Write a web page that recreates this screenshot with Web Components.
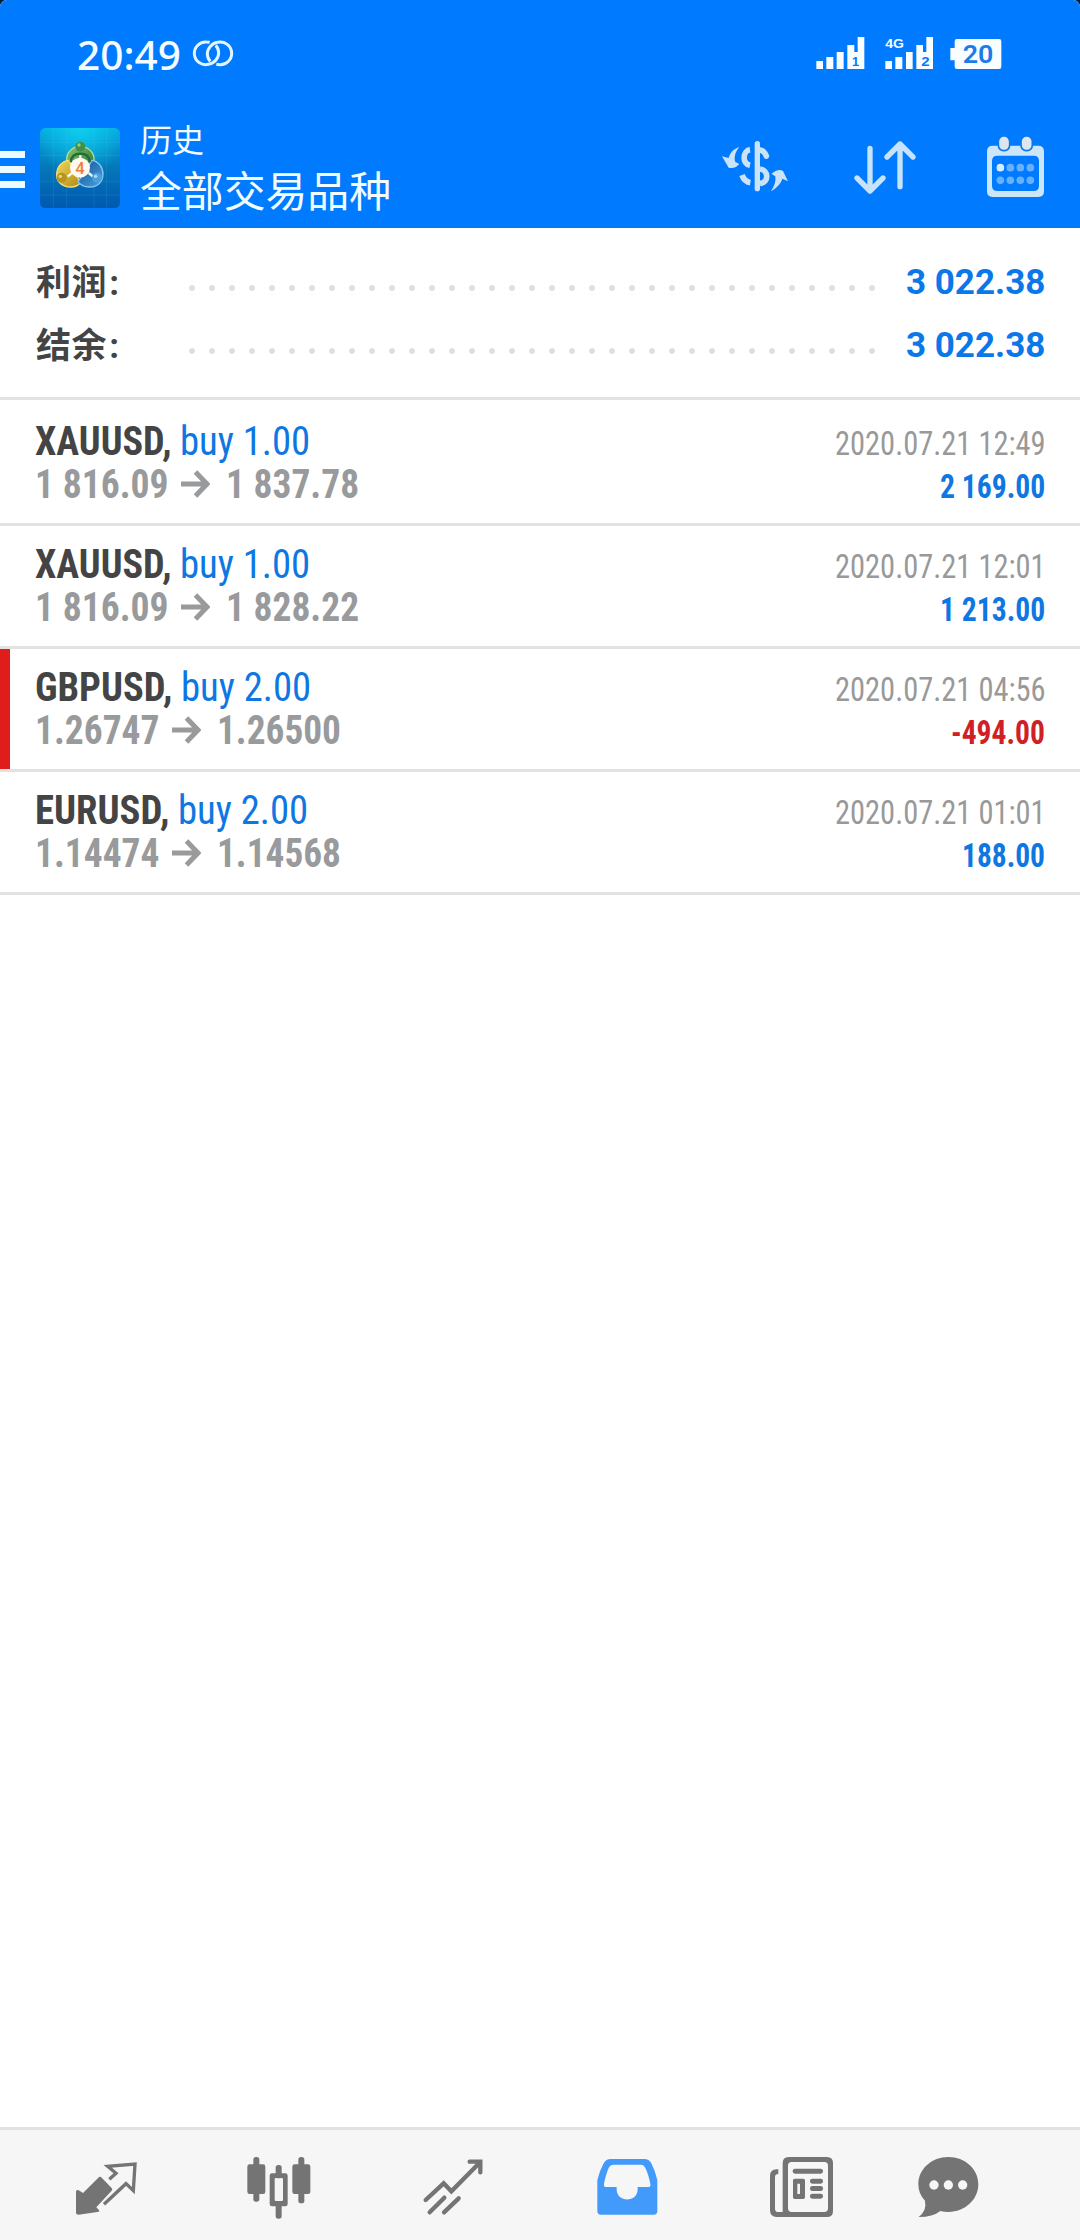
<!DOCTYPE html>
<html lang="zh-CN">
<head>
<meta charset="utf-8">
<title>历史</title>
<style>
html,body{margin:0;padding:0;background:#001c40}
body{width:1080px;height:2240px;overflow:hidden}
</style>
</head>
<body>
<history-app></history-app>
<script>
const ROBOTO = '"Roboto Condensed",Roboto,"Noto Sans CJK SC",sans-serif';
function define(name, markup, setup) {
  const tpl = document.createElement('template');
  tpl.innerHTML = markup;
  customElements.define(name, class extends HTMLElement {
    constructor() {
      super();
      this.attachShadow({mode: 'open'}).appendChild(tpl.content.cloneNode(true));
    }
    connectedCallback() { if (setup) setup(this, this.shadowRoot); }
  });
}

/* One line of text whose advance width is scaled to the "w" attribute. */
define('fit-text', `<style>
:host{display:block;white-space:pre;flex:none}
span{display:inline-block;transform-origin:0 50%;white-space:pre}
</style><span><slot></slot></span>`, (el, root) => {
  const w = parseFloat(el.getAttribute('w'));
  const s = root.querySelector('span');
  el.style.width = w + 'px';
  s.style.transform = 'scaleX(' + (w / s.offsetWidth) + ')';
});

define('status-bar', `<style>
:host{display:flex;height:108px;box-sizing:border-box;padding:0 78px 0 77px;color:#f4fcff}
.time{margin-top:25px;height:60px;font:500 39px/60px "Noto Sans",sans-serif}
svg{display:block;flex:none}
.rings{margin:39px 0 0 10px}
.sig{margin:36px 0 0 auto}
</style>
<fit-text class="time" w="104">20:49</fit-text>
<svg class="rings" width="44" height="30" viewBox="574 117 132 90" fill="none" stroke="#e2f5ff" stroke-width="9">
<path d="M630 127q-5-1-10-1a34 34 0 1 0 6 67c18-3 31-18 31-35 0-10-4-17-9-22"/><path d="M650 193q5 1 10 1a34 34 0 1 0-6-67c-18 3-31 18-31 35 0 10 4 17 9 22"/></svg>
<svg class="sig" width="188" height="36" viewBox="341 108 564 108" fill="#f8fdff">
<path d="M348 183h20v24h-20zM378 171h21v36h-21zM409 156h21v51h-21zM441 135h21v21h10V111h20v96h-51z"/>
<path d="M555 183h20v24h-20zM585 171h21v36h-21zM617 156h20v51h-20zM648 135h20v21h10V111h20v96h-50z"/>
<g font-family="Liberation Sans,sans-serif" font-weight="700"><text x="555" y="143" font-size="40" textLength="56" lengthAdjust="spacingAndGlyphs">4G</text>
<text x="455" y="198" font-size="38" fill="#0078fe">1</text><text x="663" y="198" font-size="38" textLength="25" lengthAdjust="spacingAndGlyphs" fill="#0078fe">2</text></g>
<path d="M770 117h126q7 0 7 7v76q0 7-7 7H770q-7 0-7-7v-19h-13v-37h13v-20q0-7 7-7z"/>
<text x="787" y="190" font-family="Roboto,sans-serif" font-weight="600" font-size="77" textLength="92" lengthAdjust="spacingAndGlyphs" fill="#1c7be8">20</text>
</svg>`);

define('app-logo', `<style>:host{display:block;width:80px;height:80px}svg{display:block}</style>
<svg width="80" height="80" viewBox="120 384 240 240">
<defs><linearGradient id="b" x1="0" y1="0" x2="0" y2="1"><stop offset="0" stop-color="#04a8de"/><stop offset=".5" stop-color="#0577b8"/><stop offset="1" stop-color="#0058b0"/></linearGradient>
<radialGradient id="h" cx=".5" cy="0" r=".6"><stop offset="0" stop-color="#10d8f4" stop-opacity=".8"/><stop offset="1" stop-color="#10d8f4" stop-opacity="0"/></radialGradient>
<linearGradient id="g" x1="0" y1="0" x2="1" y2="1"><stop offset="0" stop-color="#8cc66c"/><stop offset="1" stop-color="#1e6e38"/></linearGradient>
<linearGradient id="y" x1="0" y1="0" x2="1" y2="1"><stop offset="0" stop-color="#f2d75c"/><stop offset="1" stop-color="#b08a14"/></linearGradient>
<linearGradient id="u" x1="0" y1="0" x2="1" y2="1"><stop offset="0" stop-color="#124f90"/><stop offset="1" stop-color="#4ba4e4"/></linearGradient></defs>
<rect x="120" y="384" width="240" height="240" rx="16" fill="url(#b)"/><rect x="120" y="384" width="240" height="240" rx="16" fill="url(#h)"/>
<path d="M160 384v240M200 384v240M282 384v240M320 384v240M120 428h240M120 466h240M120 545h240M120 585h240" stroke="#6fd0f0" stroke-opacity=".2" stroke-width="2"/>
<ellipse cx="241" cy="478" rx="41" ry="39" fill="url(#g)" stroke="#b5e096" stroke-width="4"/>
<path d="M206 481c-21 2-36 20-36 44 0 22 18 36 42 36 11 0 22-4 29-12l-18-36z" fill="url(#y)" stroke="#f4e07a" stroke-width="4"/>
<path d="M276 481c19 3 33 20 33 42 0 24-18 38-41 38-15 0-27-6-34-16l24-34z" fill="url(#u)" stroke="#84c6f2" stroke-width="4"/>
<path d="M212 486c2-16 13-25 29-25s27 9 29 25" fill="none" stroke="#236b35" stroke-width="7"/>
<path d="M241 466v16M203 530l13-11M279 530l-13-11" stroke="#f5fbe8" stroke-width="7"/>
<circle cx="241" cy="440" r="15" fill="#438f49"/><circle cx="237" cy="435" r="5" fill="#93cf88"/><circle cx="185" cy="533" r="15" fill="#b69422"/><circle cx="181" cy="529" r="5" fill="#ead678"/><circle cx="291" cy="533" r="15" fill="#4b9fdc"/><circle cx="287" cy="529" r="5" fill="#a9dcf8"/>
<circle cx="240" cy="503" r="30" fill="#fffaf0"/>
<text x="240" y="521" text-anchor="middle" font-family="Roboto,sans-serif" font-weight="500" font-size="50" fill="#ee7d3c">4</text>
</svg>`);

define('app-bar', `<style>
:host{display:flex;height:120px;color:#f1fcff}
svg{display:block;flex:none}
.menu{margin-top:43px;width:25px;display:flex;flex-direction:column;gap:8px}
.menu i{height:7px;background:#edfaff}
app-logo{margin:20px 0 0 15px}
.titles{margin-left:20px;padding-top:6px;font-family:"Noto Sans CJK SC",sans-serif;font-weight:400}
.sub{font-size:32px;line-height:48px}
.main{font-size:42px;line-height:54px}
.acts{margin-left:auto;display:flex}
</style>
<div class="menu"><i></i><i></i><i></i></div>
<app-logo></app-logo>
<div class="titles"><fit-text class="sub" w="64">历史</fit-text><fit-text class="main" w="251">全部交易品种</fit-text></div>
<div class="acts">
<svg width="360" height="100" viewBox="60 324 1080 300">
<g fill="#cbe3f6"><path d="M118 441c-16 5-28 17-32 33l-20-5 20 34q10 3 22-2l10-9-12-6c-5-14 0-31 12-45z"/>
<path d="M213 573c14-6 30-22 34-37l17 8-15-31q-9-6-21-1l-14 9 12 8c2 15-2 29-13 44z"/>
<rect x="164" y="423" width="16" height="151" rx="8"/></g>
<g fill="none" stroke="#cbe3f6" stroke-width="17"><path d="M150 449c-22 3-25 42 0 47"/><path d="M180 450c10 2 15 8 19 18" stroke-linecap="round"/><path d="M180 507c26 3 28 40 0 43"/><path d="M126 525c5 15 14 21 25 23"/></g>
<path d="M510 445v128M471 534l39 39 39-39M600 560V432M561 471l39-39 39 39" fill="none" stroke="#c5e4fb" stroke-width="16" stroke-linecap="round" stroke-linejoin="round"/>
<path fill-rule="evenodd" fill="#cbe6f9" d="M878 437h137q17 0 17 17v120q0 17-17 17H878q-17 0-17-17V454q0-17 17-17zm14 30q-16 0-16 16v74q0 16 16 16h109q16 0 16-16v-74q0-16-16-16z"/>
<g fill="#dce6ee" stroke="#0b78ee" stroke-width="5"><rect x="895" y="408" width="34" height="44" rx="16"/><rect x="963" y="408" width="34" height="44" rx="16"/></g>
<circle cx="901" cy="503" r="11.500" fill="#d0eeff"/><g fill="#66b0fc"><circle cx="931" cy="503" r="11.500"/><circle cx="961" cy="503" r="11.500"/><circle cx="991" cy="503" r="11.500"/><circle cx="901" cy="541" r="11.500"/><circle cx="931" cy="541" r="11.500"/><circle cx="961" cy="541" r="11.500"/><circle cx="991" cy="541" r="11.500"/></g>
</svg></div>`);

define('summary-line', `<style>
:host{display:flex;height:63px;line-height:63px;font:700 35px/63px Roboto,"Noto Sans CJK SC",sans-serif}
.l{width:153px;padding:1px 0 0 1px;color:#444;letter-spacing:.4px}
.l span{margin-left:2.500px}
.d{width:700px;height:6px;margin-top:33.500px;background:radial-gradient(circle at 3px 3px,#dedede 2.4px,transparent 3.4px) 0 0/20px 6px}
.v{margin-left:auto;color:#0c77e8}
</style><div class="l"><slot></slot><span>:</span></div><div class="d"></div><div class="v"><fit-text w="139">3 022.38</fit-text></div>`);

define('deal-row', `<style>
:host{display:flex;justify-content:space-between;height:123px;box-sizing:border-box;border-bottom:3px solid #e2e2e2;padding:17px 35px 0 35px;font:400 40px/43px ${ROBOTO};font-stretch:75%}
:host([loss]){background:linear-gradient(#e01c1c,#e01c1c) 0 0/10px 100% no-repeat}
.t{display:flex;gap:8px}.s{font-weight:700;color:#444}.b{color:#0e77e2}
.p{display:flex;font-weight:700;color:#999a9c}
.p svg{margin:7px 16px 0 12.500px;display:block}
.r{font-size:33px;padding-top:1.500px;display:flex;flex-direction:column;align-items:flex-end}
.d{color:#999}.v{font-weight:700;color:#0e77e2}
:host([loss]) .v{color:#cf2026}
</style>
<div><div class="t"></div><div class="p"></div></div><div class="r"></div>`, (el, root) => {
  const a = n => el.getAttribute(n);
  const fit = (c, v) => { const [t, w] = v.split('|'); return `<fit-text class="${c}" w="${w}">${t}</fit-text>`; };
  root.querySelector('.t').innerHTML = fit('s', a('symbol')) + fit('b', a('order'));
  root.querySelector('.p').innerHTML = fit('', a('from')) +
    `<svg width="29" height="30" viewBox="0 0 29 30" fill="none" stroke="#999a9c" stroke-width="5"><path d="M0 14h26M14.500 2l11.500 12-11.500 12"/></svg>` + fit('', a('to'));
  root.querySelector('.r').innerHTML = fit('d', a('date')) + fit('v', a('profit'));
});

define('tab-bar', `<style>
:host{display:flex;height:113px;box-sizing:border-box;border-top:3px solid #e2e2e2;background:#f6f6f6;padding-left:70px}
svg{display:block;flex:none;margin-top:20px}
</style>
<svg width="72" height="72" viewBox="120 120 216 216" fill="#747474"><path d="M213 201q-4-2-8 2l-46 46-13-8q-8-3-8 5v62q0 6 8 6l56-8q9-2 4-7l-7-7 46-50q4-4 0-8z"/><path d="M238 208l20-18-25-21 82-7-5 80-22-21-66 62" fill="none" stroke="#747474" stroke-width="10" stroke-linejoin="miter"/></svg>
<svg width="72" height="72" viewBox="640 120 216 216" style="margin-left:101.300px" fill="#747474"><rect x="671" y="141" width="18" height="134" rx="8"/><rect x="653" y="163" width="54" height="89" rx="7"/><rect x="806" y="141" width="18" height="139" rx="8"/><rect x="788" y="163" width="54" height="89" rx="7"/><rect x="738" y="165" width="18" height="40" rx="8"/><rect x="738" y="280" width="18" height="46" rx="8"/><path fill-rule="evenodd" d="M727 190h40q7 0 7 7v85q0 7-7 7h-40q-7 0-7-7v-85q0-7 7-7zm12 14q-4 0-4 4v61q0 4 4 4h17q4 0 4-4v-61q0-4-4-4z"/></svg>
<svg width="72" height="72" viewBox="1160 120 216 216" style="margin-left:101.300px" fill="none" stroke="#747474" stroke-width="13" stroke-linecap="round" stroke-linejoin="round"><path d="M1186 270l54-50 23 24 84-85" stroke-linejoin="miter"/><path d="M1318 155h32v32" stroke-linejoin="miter"/><path d="M1198 307l44-44M1241 307l44-42"/></svg>
<svg width="72" height="72" viewBox="95 120 216 216" style="margin-left:103px" fill="#429bfb"><path fill-rule="evenodd" d="M151 147h101q14 0 21 13 12 23 18 51v92q0 11-11 11H122q-11 0-11-11v-92q6-28 19-51 7-13 21-13zm10 17q-12 0-16 10-8 18-14 47-2 10 7 10h31v7c0 41 63 41 63 0v-7h31q9 0 7-10-6-29-15-47-4-10-14-10z"/></svg>
<svg width="72" height="72" viewBox="615 120 216 216" style="margin-left:101.300px" fill="#747474"><path fill-rule="evenodd" d="M686 141h115q18 0 18 18v144q0 18-18 18H650q-20 0-20-20V198q0-20 20-20h5v14q-10 0-10 10v94q0 10 10 10h13V159q0-18 18-18zm9 15q-11 0-11 11v128q0 11 11 11h98q11 0 11-11V167q0-11-11-11z"/><rect x="698" y="176" width="91" height="15" rx="7"/><path fill-rule="evenodd" d="M704 206h26q5 0 5 5v51q0 5-5 5h-26q-5 0-5-5v-51q0-5 5-5zm8 15v31h8v-31z"/><rect x="750" y="206" width="39" height="15" rx="7"/><rect x="750" y="228" width="39" height="15" rx="7"/><rect x="750" y="251" width="39" height="15" rx="7"/></svg>
<svg width="72" height="72" viewBox="1055 120 216 216" style="margin-left:74.700px"><path fill="#747474" d="M1164 141c50 0 90 36 90 82s-40 83-90 83q-13 0-24-3-22 18-65 18 25-19 19-49-20-20-20-49c0-46 40-82 90-82z"/><g fill="#f6f6f6"><circle cx="1121" cy="225" r="14"/><circle cx="1164" cy="225" r="14"/><circle cx="1207" cy="225" r="14"/></g></svg>`);

define('history-app', `<style>
:host{display:flex;flex-direction:column;width:1080px;height:2240px;background:#fff;border-radius:7px 7px 0 0;overflow:hidden}
header{background:linear-gradient(#007aff,#007aff 226px,#1272d8 228px)}
.sum{height:172px;box-sizing:border-box;padding:23px 35px 0 35px;border-bottom:3px solid #e2e2e2}
main{flex:1;padding-top:3px}
</style>
<header><status-bar></status-bar><app-bar></app-bar></header>
<section class="sum"><summary-line>利润</summary-line><summary-line>结余</summary-line></section>
<main>
<deal-row symbol="XAUUSD,|136.5" order="buy 1.00|130.5" from="1 816.09|133.5" to="1 837.78|133" date="2020.07.21 12:49|210.5" profit="2 169.00|105"></deal-row>
<deal-row symbol="XAUUSD,|136.5" order="buy 1.00|130.5" from="1 816.09|133.5" to="1 828.22|133" date="2020.07.21 12:01|210.5" profit="1 213.00|105"></deal-row>
<deal-row loss symbol="GBPUSD,|137.5" order="buy 2.00|130.5" from="1.26747|124.5" to="1.26500|124" date="2020.07.21 04:56|210.5" profit="-494.00|94"></deal-row>
<deal-row symbol="EURUSD,|134.5" order="buy 2.00|130.5" from="1.14474|124.5" to="1.14568|124" date="2020.07.21 01:01|210.5" profit="188.00|83"></deal-row>
</main>
<tab-bar></tab-bar>`);
</script>
</body>
</html>
